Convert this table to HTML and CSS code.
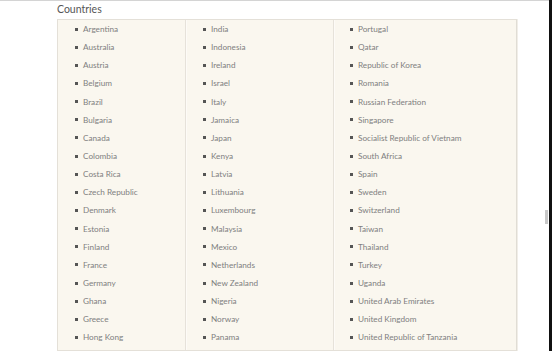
FILE: index.html
```html
<!DOCTYPE html>
<html>
<head>
<meta charset="utf-8">
<link rel="stylesheet" href="styles.css">
</head>
<body>
<div class="topline"></div>
<div class="edge"><span class="thumb"></span></div>
<section class="panel">
  <h2 class="title">Countries</h2>
  <div class="box">
    <ul class="col col1">
      <li>Argentina</li><li>Australia</li><li>Austria</li><li>Belgium</li><li>Brazil</li><li>Bulgaria</li><li>Canada</li><li>Colombia</li><li>Costa Rica</li><li>Czech Republic</li><li>Denmark</li><li>Estonia</li><li>Finland</li><li>France</li><li>Germany</li><li>Ghana</li><li>Greece</li><li>Hong Kong</li>
    </ul>
    <ul class="col col2">
      <li>India</li><li>Indonesia</li><li>Ireland</li><li>Israel</li><li>Italy</li><li>Jamaica</li><li>Japan</li><li>Kenya</li><li>Latvia</li><li>Lithuania</li><li>Luxembourg</li><li>Malaysia</li><li>Mexico</li><li>Netherlands</li><li>New Zealand</li><li>Nigeria</li><li>Norway</li><li>Panama</li>
    </ul>
    <ul class="col col3">
      <li>Portugal</li><li>Qatar</li><li>Republic of Korea</li><li>Romania</li><li>Russian Federation</li><li>Singapore</li><li>Socialist Republic of Vietnam</li><li>South Africa</li><li>Spain</li><li>Sweden</li><li>Switzerland</li><li>Taiwan</li><li>Thailand</li><li>Turkey</li><li>Uganda</li><li>United Arab Emirates</li><li>United Kingdom</li><li>United Republic of Tanzania</li>
    </ul>
  </div>
</section>
</body>
</html>
```
FILE: styles.css
```css
html, body {
  margin: 0;
  padding: 0;
  background: #ffffff;
  height: 351px;
  overflow: hidden;
}
body {
  font-family: Lato, "Open Sans", sans-serif;
  position: relative;
}
.topline {
  height: 1px;
  background: #d4d4d4;
}
.edge {
  position: absolute;
  top: 0;
  right: 0;
  width: 3px;
  height: 351px;
  background: #111;
}
.thumb {
  position: absolute;
  left: -4px;
  top: 210px;
  width: 3px;
  height: 14px;
  background: #c8c8c8;
}
.panel {
  margin-left: 57px;
  width: 460px;
}
.title {
  margin: 0;
  height: 16px;
  padding-top: 2px;
  font-size: 10.5px;
  line-height: 13px;
  font-weight: 400;
  color: #555;
}
.box {
  display: grid;
  grid-template-columns: 128px 148px 1fr;
  background: #faf7ef;
  border: 1px solid #e4e0d8;
  border-right: 1px solid #e0ddd5;
  box-shadow: 1px 0 0 #f1eee8;
  height: 332px;
  box-sizing: border-box;
}
.col {
  list-style: none;
  margin: 0;
  padding: 0 0 0 17px;
}
.col1, .col2 {
  border-right: 1px solid #e6e2da;
  box-shadow: 1px 0 0 #fdfbf7;
}
.col3 {
  padding-left: 16px;
}
.col li {
  display: flex;
  align-items: center;
  height: 18.15px;
  font-size: 8.2px;
  color: #808080;
  white-space: nowrap;
}
.col li::before {
  content: "";
  width: 3px;
  height: 3px;
  background: #555;
  margin-right: 5px;
  flex: none;
}
```
